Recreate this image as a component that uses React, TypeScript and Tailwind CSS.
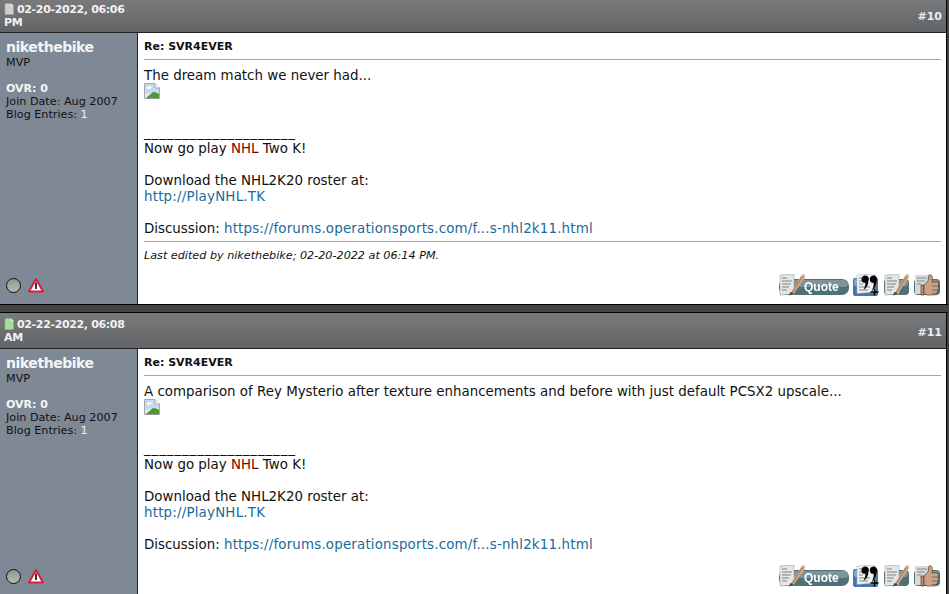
import React from "react";

const font = "font-['DejaVu_Sans','Liberation_Sans',sans-serif]";

function Broken() {
  return (
    <svg width="16" height="16" viewBox="0 0 16 16" className="block">
      <path d="M0.5 0.5H11L15.5 5V15.5H0.5Z" fill="#e8edf5" stroke="#a8a8a8" />
      <path d="M1 1H11V5H15V9L1 11Z" fill="#c9d8f2" />
      <path d="M3 4c2-1 4-1 5 1l-5 1z" fill="#fff" />
      <path d="M2 15L9 9c3 0 5 1 6 2v4Z" fill="#4c9a2e" />
      <path d="M11 0.5V5H15.5" fill="#fff" stroke="#a8a8a8" />
      <path d="M1 15H15V15.5H1Z" fill="#8a8a8a" />
    </svg>
  );
}

function Doc({ green }: { green: boolean }) {
  return (
    <svg width="10" height="12" viewBox="0 0 10 12" className="inline-block align-[-2px] mr-[3px]">
      <path d="M1 1.500Q1 0.500 2 0.500H7L9.500 3V11.500H1Z" fill={green ? "#a8dc9c" : "#cfcfcf"} stroke={green ? "#7fbf75" : "#a8a8a8"} strokeWidth="0.7" />
      <path d="M7 0.500V3H9.500Z" fill={green ? "#dff5da" : "#eeeeee"} />
    </svg>
  );
}

function Page({ w = 15 }: { w?: number }) {
  return (
    <g>
      <path d={`M1 1L${w} 0V20L1 21Z`} fill="#e4e6e6" stroke="#8d9899" strokeWidth="0.5" />
      <path d={`M3 4H8M3 7H${w - 2}M3 10H${w - 3}M3 13H${w - 5}M3 16H${w - 7}`} stroke="#7c8385" strokeWidth="1" />
    </g>
  );
}

function Pen({ dx = 0 }: { dx?: number }) {
  return (
    <g transform={`translate(${dx} 0)`}>
      <path d="M11 20L22 2Q24 -1 25.500 1Q26.500 3 24.500 6L15 19.500Z" fill="#cfa582" />
      <path d="M13 19L23 3" stroke="#8e6f57" strokeWidth="0.8" />
      <path d="M10 21.500L11.500 18L15 19.500Z" fill="#3c3c3c" />
    </g>
  );
}

function QuoteButton() {
  return (
    <svg width="70" height="22" viewBox="0 0 70 22" className="block blur-[0.35px] -mr-[1px]">
      <rect x="0" y="5" width="70" height="16" rx="7" fill="#4f7077" />
      <rect x="1" y="6" width="68" height="7" rx="3.5" fill="#7d959a" />
      <Page />
      <Pen />
      <text x="25" y="16.500" fontSize="12" fontWeight="700" fill="#fff" fontFamily="Liberation Sans, sans-serif">Quote</text>
    </svg>
  );
}

function MultiQuote() {
  return (
    <svg width="26" height="22" viewBox="0 0 26 22" className="block blur-[0.3px]">
      <rect x="0" y="4" width="25" height="18" rx="2" fill="#4a75aa" />
      <rect x="1" y="5" width="23" height="7" rx="2" fill="#8aa8cc" />
      <g transform="translate(3 0)">
        <path d="M1 1L19 0V18L1 19.500Z" fill="#f0f1f3" stroke="#a0a8b0" strokeWidth="0.5" />
        <path d="M3 4H7M3 7H8M3 10H7M3 13H14M3 16H12" stroke="#7c8385" strokeWidth="1" />
      </g>
      <path d="M8.500 5.200a3.700 3.700 0 1 1 7 1.600C15.500 10.500 13.500 14 10.500 16C12 13 12.700 10.500 12.300 8.800A3.700 3.700 0 0 1 8.500 5.200Z" fill="#050505" />
      <path d="M16.800 5.200a3.700 3.700 0 1 1 7 1.600C23.800 11 21.500 15 18.500 17.500C20.300 14 21 10.500 20.600 8.800A3.700 3.700 0 0 1 16.800 5.200Z" fill="#050505" />
      <path d="M17.500 18H25.500M21.500 14.500V21.500" stroke="#000" strokeWidth="1.400" />
    </svg>
  );
}

function EditIcon() {
  return (
    <svg width="25" height="22" viewBox="0 0 25 22" className="block blur-[0.35px]">
      <rect x="0" y="5" width="25" height="16" rx="4" fill="#4f7077" />
      <rect x="1" y="6" width="23" height="6" rx="3" fill="#7d959a" />
      <Page />
      <Pen dx={-1} />
    </svg>
  );
}

function ThumbIcon() {
  return (
    <svg width="26" height="22" viewBox="0 0 26 22" className="block blur-[0.35px]">
      <rect x="0" y="5" width="26" height="16" rx="4" fill="#4f7077" />
      <rect x="1" y="6" width="24" height="6" rx="3" fill="#7d959a" />
      <path d="M1 1H16V20H1Z" fill="#d8dada" />
      <path d="M3 4H13M3 7H11M3 10H7" stroke="#858b8c" />
      <path d="M7 11H10V21H7Z" fill="#b98f6f" stroke="#4e4036" strokeWidth="0.7" />
      <path d="M10 11L14 7L15 1C18 0 19 3 18 8H23C25 8 25 11 24 12C25 14 25 15 23.500 16C24 18 23 19 22 19.500C22 21 21 21 19 21H13L10 20Z" fill="#cba180" stroke="#4e4036" strokeWidth="0.7" />
      <path d="M18 12H24M18 16H23.500M18 19.500H22" stroke="#6c5443" strokeWidth="0.7" />
    </svg>
  );
}

function Post({ green, date, ampm, num, body, editBlock, bodyH, headH, headPt }: {
  green: boolean;
  date: string;
  ampm: string;
  num: string;
  body: React.ReactNode;
  editBlock?: boolean;
  bodyH: string;
  headH: string;
  headPt: string;
}) {
  return (
    <div className="w-[947px] border-r border-black">
      <div className={`flex justify-between items-end ${headH} ${headPt} bg-gradient-to-b from-[#797a7c] to-[#636465] text-[#f2f2f2] font-bold text-[11px] leading-[13px] tracking-[-0.35px] pl-[4px] pr-[4px] border-b border-[#222222]`}>
        <div className="w-[130px] self-start">
          <Doc green={green} />
          {date}
          <br />
          {ampm}
        </div>
        <div className="pb-[9px] tracking-normal text-[#e8edf5]">{num}</div>
      </div>
      <div className={`flex ${bodyH}`}>
        <div className="w-[138px] shrink-0 bg-[#7f8996] pl-[6px] pt-[6px] relative border-r border-[#222222] text-[11.2px] leading-[13px] text-[#111111]">
          <div className="text-[14px] leading-[17px] font-bold tracking-[-0.45px] text-[#f5f5f5]">nikethebike</div>
          <div>MVP</div>
          <div className="mt-[13px] font-bold text-[#f5f5f5] text-[11px]">OVR: 0</div>
          <div>Join Date: Aug 2007</div>
          <div>Blog Entries: <span className="text-[#e8eef6]">1</span></div>
          <div className="absolute left-[6px] bottom-[11px] flex items-center gap-[7px]">
            <div className="w-[15px] h-[15px] rounded-full border border-[#111111] bg-gradient-to-b from-[#8f9692] to-[#b4bab6]" />
            <svg width="16" height="16" viewBox="0 0 16 16" className="block">
              <path d="M8 2L15 14.500H1Z" fill="#fff" stroke="#d81e3c" strokeWidth="2" strokeLinejoin="round" />
              <path d="M8 5.500V12" stroke="#111" strokeWidth="1.700" />
            </svg>
          </div>
        </div>
        <div className="flex-1 bg-white text-[13.4px] leading-[16px] text-[#111111] relative pl-[6px] pr-[5px] pt-[7px]">
          <div className="text-[11px] leading-[14px] font-bold pb-[5px] border-b border-[#a3a3a3] mb-[8px]">Re: SVR4EVER</div>
          {body}
          <div className="h-[26px]" />
          <div className="tracking-[0.9px]">____________________</div>
          <div>Now go play <span className="text-[#800000]">NHL</span> Two K!</div>
          <div className="h-[16px]" />
          <div>Download the NHL2K20 roster at:</div>
          <div className="text-[#1a6a9c] tracking-[0.2px]">http://PlayNHL.TK</div>
          <div className="h-[16px]" />
          <div>Discussion: <span className="text-[#1a6a9c] tracking-[0.18px]">https://forums.operationsports.com/f...s-nhl2k11.html</span></div>
          {editBlock && (
            <div className="mt-[4px] pt-[7px] border-t border-[#a3a3a3] text-[11.2px] leading-[14px] italic">Last edited by nikethebike; 02-20-2022 at 06:14 PM.</div>
          )}
          <div className="absolute right-[6px] bottom-[8px] flex items-end gap-[5px]">
            <QuoteButton />
            <MultiQuote />
            <EditIcon />
            <ThumbIcon />
          </div>
        </div>
      </div>
    </div>
  );
}

export default function App() {
  return (
    <div className={`w-[949px] h-[594px] overflow-hidden bg-[#444444] ${font}`}>
      <Post
        green={false}
        date="02-20-2022, 06:06"
        ampm="PM"
        num="#10"
        editBlock
        headH="h-[33px]"
        headPt="pt-[3px]"
        bodyH="h-[271px]"
        body={<><div className="h-[15px]">The dream match we never had...</div><Broken /></>}
      />
      <div className="h-[9px] w-[948px] border-y border-black bg-[#444444]" />
      <Post
        green
        date="02-22-2022, 06:08"
        ampm="AM"
        num="#11"
        headH="h-[36px]"
        headPt="pt-[5px]"
        bodyH="h-[246px]"
        body={<><div className="h-[15px]">A comparison of Rey Mysterio after texture enhancements and before with just default PCSX2 upscale...</div><Broken /></>}
      />
    </div>
  );
}
